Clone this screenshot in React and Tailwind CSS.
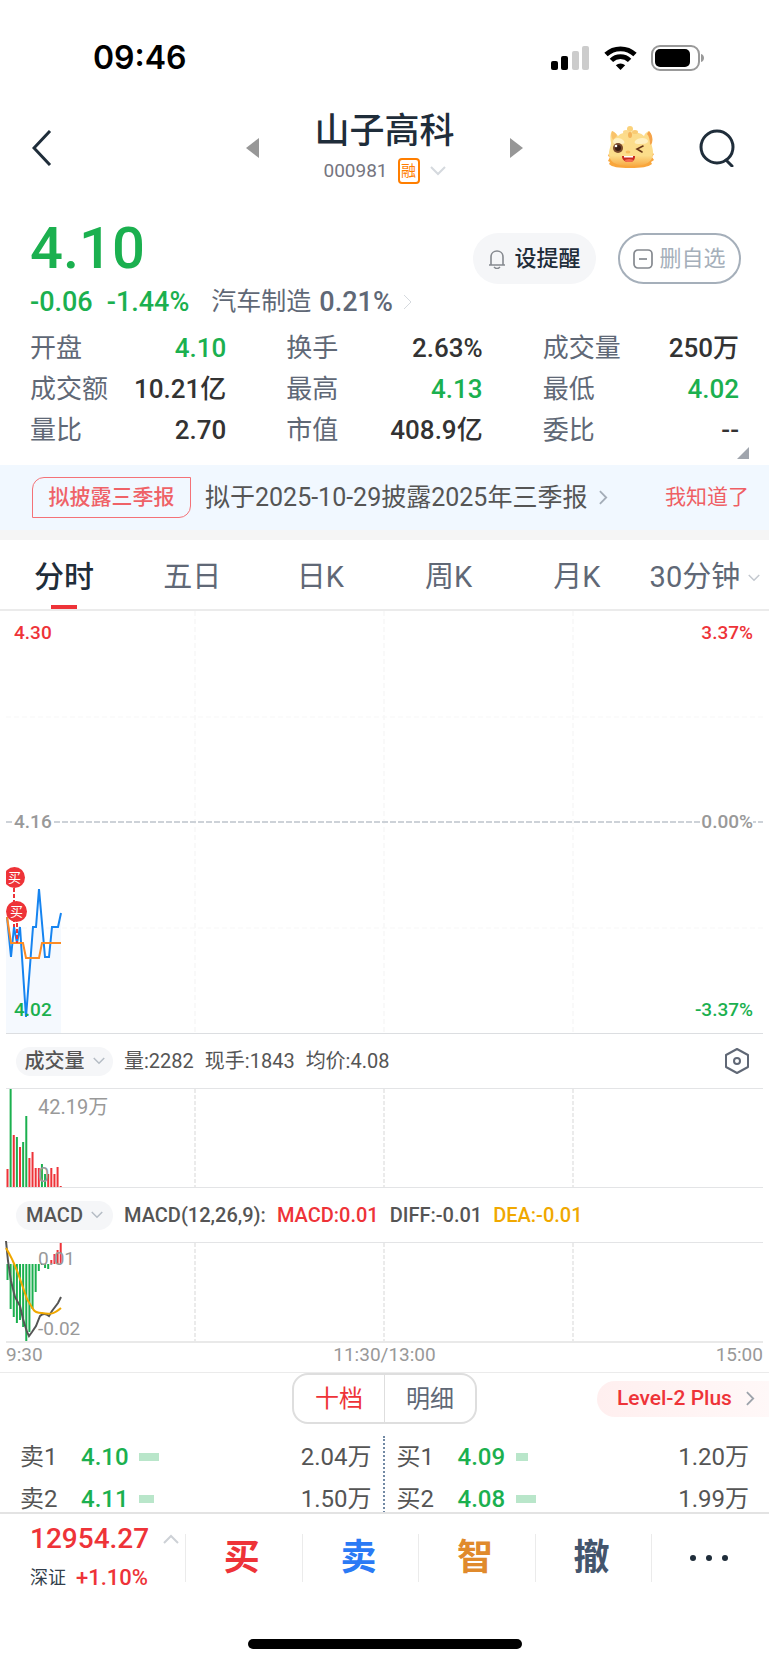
import React from 'react';

const quotes = [
  { label: '开盘', value: '4.10', down: true },
  { label: '换手', value: '2.63%' },
  { label: '成交量', value: '250万' },
  { label: '成交额', value: '10.21亿' },
  { label: '最高', value: '4.13', down: true },
  { label: '最低', value: '4.02', down: true },
  { label: '量比', value: '2.70' },
  { label: '市值', value: '408.9亿' },
  { label: '委比', value: '--' },
];

const periods = ['五日', '日K', '周K', '月K'];

const UP = '#ee3338';
const DOWN = '#1bb04f';

// One entry per minute since 9:30: [height, rising]
const volumes = [
  [18, 1], [98, 0], [52, 1], [50, 0], [40, 1], [45, 0], [71, 0], [29, 1], [35, 1],
  [19, 1], [19, 1], [23, 0], [13, 0], [13, 1], [19, 1], [13, 1], [20, 1], [1, 1],
];

// Positive bars hang below the zero line (green), negative ones rise above it (red)
const macdBars = [16, 45, 53, 59, 56, 63, 77, 68, 45, 28, 7, 1, 4, 5, -4, -10, -14, -21];

const asks = [
  { name: '卖1', price: '4.10', bar: 'w-5', amount: '2.04万' },
  { name: '卖2', price: '4.11', bar: 'w-[15px]', amount: '1.50万' },
];

const bids = [
  { name: '买1', price: '4.09', bar: 'w-3', amount: '1.20万' },
  { name: '买2', price: '4.08', bar: 'w-5', amount: '1.99万' },
];

const Chevron = ({ d, className, width = 2, viewBox }) => (
  <svg className={className} viewBox={viewBox} fill="none" stroke="currentColor" strokeWidth={width} aria-hidden="true">
    <path d={d} />
  </svg>
);

const ChevronDown = ({ className }) => (
  <Chevron className={className} viewBox="0 0 16 10" d="M1 1l7 7 7-7" />
);

const ChevronRight = ({ className, width }) => (
  <Chevron className={className} viewBox="0 0 10 16" d="M1 1l7 7-7 7" width={width} />
);

const Mascot = () => (
  <svg className="w-12 h-11" viewBox="0 0 48 44" aria-hidden="true">
    <defs>
      <linearGradient id="face" x1="0" y1="0" x2="0" y2="1">
        <stop offset="0" stopColor="#fcdc8c" />
        <stop offset="0.7" stopColor="#fcdd8a" />
        <stop offset="1" stopColor="#f8aa44" />
      </linearGradient>
    </defs>
    <path d="M3 25L1 30l2 1-2 4 2 1-1 2c3 3 9 4 21 4s18-1 22-4l-1-2 3-2-2-3 2-3-3-2 1-3z" fill="#f9a63c" />
    <path d="M5 5c2 1 4 2 6 5 3-3 7-4 13-4s10 1 13 4c1-3 3-4 5-5 3 3 4 7 3 12-1 2 1 5 1 9 0 10-6 14-22 14S2 36 2 27c0-4 2-7 2-10C3 12 3 8 5 5z" fill="url(#face)" />
    <path d="M42 5c3 3 4 7 3 12l-2 2c0-5-1-9-3-11z" fill="#f5a24a" />
    <path d="M5 5c2 1 4 2 5 5l-4 4c-2-3-2-6-1-9z" fill="#f9c26a" />
    <ellipse cx="23" cy="3" rx="3" ry="3" fill="#fbd27a" />
    <ellipse cx="19" cy="6" rx="3" ry="2" fill="#fbd98c" />
    <ellipse cx="28" cy="6" rx="3" ry="2" fill="#f9cb74" />
    <ellipse cx="23" cy="9" rx="2" ry="3" fill="#f3b35a" />
    <path d="M6 16c0-5 8-5 11-1 1 2 0 3-2 3-4 0-8 1-9-2z" fill="#fff0c2" />
    <path d="M28 15c3-4 12-4 13 0 0 3-5 3-10 3-3 0-4-1-3-3z" fill="#fff0c2" />
    <circle cx="11" cy="22" r="5" fill="#7a4a2c" />
    <circle cx="11" cy="22" r="3" fill="#3b1d12" />
    <circle cx="9" cy="20" r="1.3" fill="#fff" />
    <path d="M36 20l-6 3 5 3" fill="none" stroke="#6b3818" strokeWidth="1.6" strokeLinecap="round" />
    <ellipse cx="21" cy="26" rx="2.4" ry="1.5" fill="#f8bd5c" />
    <path d="M15 30h13c0 4-2 6-6 6s-7-2-7-6z" fill="#c92920" />
    <path d="M17 30h9v1.5h-9z" fill="#fff" />
    <ellipse cx="22" cy="34.5" rx="4" ry="1.5" fill="#f46a4e" />
  </svg>
);

const StatusBar = () => (
  <div className="h-[106px] pt-[10px] flex items-center justify-between pl-[93px] pr-16">
    <span className="font-[Inter] font-semibold text-[32px] leading-none text-black">09:46</span>
    <div className="flex items-center gap-[14px]">
      <svg className="w-[39px] h-6" viewBox="0 0 39 24" aria-hidden="true">
        <rect x="0" y="15" width="7" height="9" rx="2" />
        <rect x="10" y="10" width="7" height="14" rx="2" />
        <rect x="21" y="5" width="7" height="19" rx="2" fill="#ccc" />
        <rect x="31" y="0" width="7" height="24" rx="2" fill="#ccc" />
      </svg>
      <svg className="w-[33px] h-6" viewBox="0 0 33 24" fill="none" stroke="#000" strokeWidth="4.8" aria-hidden="true">
        <path d="M2 8.6A21 21 0 0 1 31 8.6" />
        <path d="M7.4 14.4A13 13 0 0 1 25.6 14.4" />
        <path d="M11.8 19.2A7 7 0 0 1 21.2 19.2L16.5 24z" fill="#000" stroke="none" />
      </svg>
      <svg className="w-[54px] h-[26px]" viewBox="0 0 54 26" aria-hidden="true">
        <rect x="1" y="1" width="47" height="24" rx="8" fill="none" stroke="#999" strokeWidth="2" />
        <rect x="4" y="4" width="35" height="18" rx="5" />
        <path d="M50 9c4 1 4 7 0 8z" fill="#999" />
      </svg>
    </div>
  </div>
);

const Header = () => (
  <header className="h-[84px] mb-[22px] px-8 flex items-center justify-between">
    <button type="button" aria-label="返回" className="w-[140px] text-[#1f2d3a]">
      <Chevron className="w-5 h-9" viewBox="0 0 20 36" d="M18 1L2 18l16 17" width={3} />
    </button>
    <div className="flex items-center gap-[55px]">
      <button type="button" aria-label="上一只">
        <svg className="w-[13px] h-5" viewBox="0 0 13 20"><path d="M13 0v20L0 10z" fill="#979797" /></svg>
      </button>
      <div className="flex flex-col items-center">
        <h1 className="text-[35px] leading-[46px] font-medium text-[#1f2d3a]">山子高科</h1>
        <div className="flex items-center gap-[10px] h-8 text-[19px] text-[#75757f]">
          <span>000981</span>
          <span className="w-[22px] h-[26px] flex items-center justify-center rounded border-2 border-[#ff7e00] text-[15px] leading-none text-[#ff7e00]">融</span>
          <ChevronDown className="w-4 h-[10px] text-[#d5d9de]" />
        </div>
      </div>
      <button type="button" aria-label="下一只">
        <svg className="w-[13px] h-5" viewBox="0 0 13 20"><path d="M0 0v20l13-10z" fill="#979797" /></svg>
      </button>
    </div>
    <div className="w-[140px] flex items-center justify-between pl-[10px] pr-[2px]">
      <button type="button" aria-label="助手"><Mascot /></button>
      <button type="button" aria-label="搜索">
        <svg className="w-9 h-[38px]" viewBox="0 0 36 38" fill="none" stroke="#1f2d3a" strokeWidth="3">
          <circle cx="18" cy="18" r="16" />
          <path d="M27 31l6 6" strokeLinecap="round" />
        </svg>
      </button>
    </div>
  </header>
);

const Summary = () => (
  <section className="pl-[30px] pr-7">
    <div className="flex items-end justify-between h-[72px]">
      <strong className="text-[58px] leading-[72px] font-medium text-[#1bb04f]">4.10</strong>
      <div className="flex gap-[22px] text-[22px]">
        <button type="button" className="w-[123px] h-[51px] flex items-center justify-center gap-2 rounded-full bg-[#f5f6f8] font-medium text-[#1f2d3a]">
          <svg className="w-[18px] h-5" viewBox="0 0 18 20" fill="none" stroke="#85898f" strokeWidth="1.6">
            <path d="M1 16h16M3 16V8c0-4 3-6 6-6s6 2 6 6v8M6 18c2 2 4 2 6 0" />
          </svg>
          设提醒
        </button>
        <button type="button" className="w-[123px] h-[51px] flex items-center justify-center gap-[6px] rounded-full border-2 border-[#a5afba] text-[#a5afba]">
          <svg className="w-5 h-5" viewBox="0 0 20 20" fill="none" stroke="#85898f" strokeWidth="1.7">
            <rect x="1" y="1" width="18" height="18" rx="4" />
            <path d="M6 10h8" />
          </svg>
          删自选
        </button>
      </div>
    </div>
    <div className="flex items-center h-9 text-[27px] font-medium text-[#1bb04f]">
      <span>-0.06</span>
      <span className="ml-[14px]">-1.44%</span>
      <a href="#sector" className="ml-[22px] flex items-center text-[#606876]">
        <span className="mr-2 text-[25px] font-normal">汽车制造</span>
        0.21%
        <ChevronRight className="ml-[10px] w-[10px] h-4 text-[#d5d9de]" width={1} />
      </a>
    </div>
    <dl className="mt-2 mr-[2px] grid grid-cols-3 gap-x-[60px] text-[26px] leading-[41px]">
      {quotes.map((q) => (
        <div key={q.label} className="flex justify-between">
          <dt className="text-[#606876]">{q.label}</dt>
          <dd className={q.down ? 'font-medium text-[#1bb04f]' : 'font-medium text-[#333]'}>{q.value}</dd>
        </div>
      ))}
    </dl>
    <svg className="ml-auto -mt-1 -mr-2 mb-[6px] w-3 h-3" viewBox="0 0 12 12"><path d="M12 0v12H0z" fill="#a0a5ad" /></svg>
  </section>
);

const Notice = () => (
  <div className="h-[75px] pl-8 pr-5 flex items-center bg-[#f1f8ff] border-b-[10px] border-[#f5f5f5]">
    <span className="w-[159px] h-[41px] flex items-center justify-center rounded-tl-xl rounded-br-xl border border-[#f47277] text-[21px] font-medium text-[#ef6267]">
      拟披露三季报
    </span>
    <a href="#report" className="ml-[14px] flex items-center gap-3 text-[25px] text-[#555]">
      <span>拟于2025-10-29披露2025年三季报</span>
      <ChevronRight className="w-[9px] h-[15px] text-[#a4adb8]" />
    </a>
    <button type="button" className="ml-auto text-[21px] text-[#ef5f64]">我知道了</button>
  </div>
);

const PeriodTabs = () => (
  <nav className="h-[71px] grid grid-cols-6 border-b-2 border-[#ebebeb] text-[29px] text-[#606876]">
    <button type="button" className="relative pt-1 text-[30px] font-medium text-[#1f2d3a]">
      分时
      <span className="absolute bottom-0 left-1/2 -ml-[13px] w-[26px] h-1 bg-[#ee3338]" />
    </button>
    {periods.map((p) => (
      <button type="button" key={p} className="pt-[6px]">{p}</button>
    ))}
    <button type="button" className="pt-[6px] flex items-center justify-center gap-2 whitespace-nowrap">
      30分钟
      <ChevronDown className="w-3 h-2 text-[#c3c8cf]" />
    </button>
  </nav>
);

const VerticalGrid = ({ height, color, dash }) => (
  <g stroke={color} strokeDasharray={dash}>
    {[189, 378, 567].map((x) => (
      <line key={x} x1={x} x2={x} y1="0" y2={height} strokeWidth="2" />
    ))}
  </g>
);

const BuyMark = ({ className }) => (
  <span className={`absolute w-[21px] h-[21px] flex items-center justify-center rounded-full bg-[#ee3338] text-[13px] leading-none font-normal text-white ${className}`}>买</span>
);

const PriceChart = () => (
  <div className="relative overflow-hidden mx-[6px] border-b border-[#dcdee1] text-[19px] leading-6 font-medium">
    <svg className="block w-full h-[422px]" viewBox="0 0 757 422" preserveAspectRatio="none" fill="none" aria-hidden="true">
      <VerticalGrid height="422" color="#f9f9f9" dash="5 3" />
      <path d="M0 106H757M0 317H757" stroke="#f7f7f7" strokeDasharray="5 3" />
      <path d="M0 211H757" stroke="#cdd2d8" strokeWidth="2" strokeDasharray="6 2" />
      <path d="M0 306L5 346 8 316 11 332 14 316 20 406 27 316H30L33 278 39 346H43L46 316H52L55 302V422H0z" fill="#f5f9fe" />
      <path d="M1 306L5 346 8 316 11 332 14 316 20 406 27 316H30L33 278 39 346H43L46 316H52L55 302" stroke="#1684f0" strokeWidth="2" />
      <path d="M1 306L5 332H17L20 347H33L36 332H55" stroke="#fb8b24" strokeWidth="2" />
      <path d="M8 277V316M11 300V332" stroke="#ee3338" strokeWidth="2" strokeDasharray="4 2" />
    </svg>
    <BuyMark className="left-[-2px] top-[256px]" />
    <BuyMark className="left-0 top-[290px]" />
    <span className="absolute left-2 top-[10px] text-[#ee3338]">4.30</span>
    <span className="absolute right-[10px] top-[10px] text-[#ee3338]">3.37%</span>
    <span className="absolute left-2 top-[199px] bg-white text-[#999]">4.16</span>
    <span className="absolute right-[10px] top-[199px] bg-white text-[#999]">0.00%</span>
    <span className="absolute left-2 top-[387px] text-[#1bb04f]">4.02</span>
    <span className="absolute right-[10px] top-[387px] text-[#1bb04f]">-3.37%</span>
  </div>
);

const IndicatorPill = ({ children }) => (
  <button type="button" className="w-[97px] h-[29px] mr-[11px] flex items-center justify-center gap-2 rounded-full bg-[#f5f6f8] font-medium">
    {children}
    <ChevronDown className="w-3 h-2 text-[#b5bcc5]" />
  </button>
);

const IndicatorHeader = ({ name, children }) => (
  <div className="h-[55px] mx-[6px] pl-[10px] pr-[14px] flex items-center border-b border-[#e3e4e6] text-[20px] leading-6 text-[#555]">
    <IndicatorPill>{name}</IndicatorPill>
    {children}
  </div>
);

const VolumeChart = () => (
  <div className="relative mx-[6px] border-b border-[#e3e4e6] text-[20px] leading-6 text-[#999]">
    <svg className="block w-full h-[98px]" viewBox="0 0 757 98" preserveAspectRatio="none" aria-hidden="true">
      <VerticalGrid height="98" color="#ebebeb" dash="4 2" />
      {volumes.map(([h, rising], i) => (
        <rect key={i} x={i * 3.13 + 0.5} y={98 - h} width="2" height={h} fill={rising ? UP : DOWN} />
      ))}
    </svg>
    <span className="absolute left-8 top-[6px]">42.19万</span>
    <span className="absolute left-8 bottom-0">0</span>
  </div>
);

const MacdChart = () => (
  <div className="relative mx-[6px] border-b-2 border-[#e9e9e9] text-[19px] leading-6 text-[#999]">
    <svg className="block w-full h-[98px] overflow-visible" viewBox="0 0 757 98" preserveAspectRatio="none" fill="none" aria-hidden="true">
      <VerticalGrid height="98" color="#ebebeb" dash="4 2" />
      {macdBars.map((v, i) => (
        <rect key={i} x={i * 3.13 + 0.5} y={v > 0 ? 21 : 21 + v} width="2" height={Math.abs(v)} fill={v > 0 ? DOWN : UP} />
      ))}
      <path d="M0 -2L2 18 5 38 9 54 14 63 17 76 21 89 23 93 26 89 30 83 34 73Q38 69 43 73L46 68 52 60 55 54" stroke="#555" strokeWidth="2" />
      <path d="M0 5Q8 18 14 36L21 56 27 66Q29 70 36 70C46 72 49 70 55 65" stroke="#f0a800" strokeWidth="2" />
    </svg>
    <span className="absolute left-8 top-1">0.01</span>
    <span className="absolute left-8 bottom-0">-0.02</span>
  </div>
);

const OrderSide = ({ rows, className }) => (
  <table className={`w-1/2 text-[24px] leading-[42px] text-[#555] border-separate border-spacing-0 ${className}`}>
    <tbody>
      {rows.map((row) => (
        <tr key={row.name}>
          <td className="p-0 w-[61px]">{row.name}</td>
          <td className="p-0 w-[58px] font-medium text-[#1bb04f]">{row.price}</td>
          <td className="p-0"><div className={`h-2 bg-[#b9e6ca] ${row.bar}`} /></td>
          <td className="p-0 text-right">{row.amount}</td>
        </tr>
      ))}
    </tbody>
  </table>
);

const OrderBook = () => (
  <section className="border-t border-[#ebebeb]">
    <div className="grid grid-cols-3 items-center h-[51px]">
      <div className="col-start-2 justify-self-center flex w-[185px] h-[51px] rounded-2xl border-2 border-[#dedede] text-[24px]">
        <button type="button" className="flex-1 border-r border-[#dedede] text-[#ee3338]">十档</button>
        <button type="button" className="flex-1 text-[#606876]">明细</button>
      </div>
      <a href="#level2" className="justify-self-end w-[172px] h-9 pl-5 pr-[14px] flex items-center justify-between whitespace-nowrap rounded-l-full bg-linear-to-r from-[#ffefef] to-[#fff8f8] text-[21px] font-medium text-[#ee3338]">
        Level-2 Plus
        <ChevronRight className="w-[9px] h-[15px] text-[#9da3ab]" />
      </a>
    </div>
    <div className="mt-[10px] flex h-[78px] overflow-hidden">
      <OrderSide rows={asks} className="pl-5 pr-[11px] mt-[2px] border-r-2 border-dotted border-[#7189a4]" />
      <OrderSide rows={bids} className="pl-3 pr-5 mt-[2px]" />
    </div>
  </section>
);

const TradeBar = () => (
  <footer className="border-t-2 border-[#e3e3e3]">
    <div className="h-[88px] flex items-center">
      <button type="button" className="w-[185px] pl-[30px] pt-1 text-left font-medium text-[#ee3338]">
        <span className="flex items-center justify-between pr-[6px] text-[28px] leading-9">
          12954.27
          <Chevron className="w-4 h-[10px] text-[#cdd1d6]" viewBox="0 0 16 10" d="M1 9l7-7 7 7" />
        </span>
        <span className="flex items-center gap-[10px] text-[22px] leading-[42px]">
          <span className="text-[18px] font-normal text-[#333f4c]">深证</span>
          +1.10%
        </span>
      </button>
      <div className="flex-1 grid grid-cols-5 h-12 divide-x divide-[#ebebeb] border-l border-[#ebebeb] text-[36px] leading-none font-bold">
        <button type="button" className="pr-1 text-[#ee3338]">买</button>
        <button type="button" className="pr-1 text-[#2a7af5]">卖</button>
        <button type="button" className="pr-1 text-[#e08a2c]">智</button>
        <button type="button" className="pr-1 text-[#44556c]">撤</button>
        <button type="button" aria-label="更多" className="pr-1 flex items-center justify-center gap-[10px]">
          <i className="w-[6px] h-[6px] rounded-full bg-[#1f2d3a]" />
          <i className="w-[6px] h-[6px] rounded-full bg-[#1f2d3a]" />
          <i className="w-[6px] h-[6px] rounded-full bg-[#1f2d3a]" />
        </button>
      </div>
    </div>
    <div className="mx-auto mt-[37px] mb-4 w-[274px] h-[10px] rounded-full bg-black" />
  </footer>
);

const App = () => (
  <main className="w-full bg-white font-['Roboto','Noto_Sans_CJK_SC',sans-serif]">
    <StatusBar />
    <Header />
    <Summary />
    <Notice />
    <PeriodTabs />
    <PriceChart />
    <IndicatorHeader name="成交量">
      <span className="flex gap-[11px]">
        <span>量:2282</span>
        <span>现手:1843</span>
        <span>均价:4.08</span>
      </span>
      <button type="button" aria-label="指标设置" className="ml-auto">
        <svg className="w-6 h-[26px]" viewBox="0 0 24 26" fill="none" stroke="#606876" strokeWidth="2">
          <path d="M12 1l11 6v12l-11 6-11-6V7z" strokeLinejoin="round" />
          <circle cx="12" cy="13" r="3" />
        </svg>
      </button>
    </IndicatorHeader>
    <VolumeChart />
    <IndicatorHeader name="MACD">
      <span className="flex gap-[11px] font-medium">
        <span>MACD(12,26,9):</span>
        <span className="text-[#ee3338]">MACD:0.01</span>
        <span>DIFF:-0.01</span>
        <span className="text-[#f0a800]">DEA:-0.01</span>
      </span>
    </IndicatorHeader>
    <MacdChart />
    <div className="h-[29px] px-[6px] grid grid-cols-3 text-[19px] leading-6 text-[#999]">
      <span>9:30</span>
      <span className="text-center">11:30/13:00</span>
      <span className="text-right">15:00</span>
    </div>
    <OrderBook />
    <TradeBar />
  </main>
);

export default App;
